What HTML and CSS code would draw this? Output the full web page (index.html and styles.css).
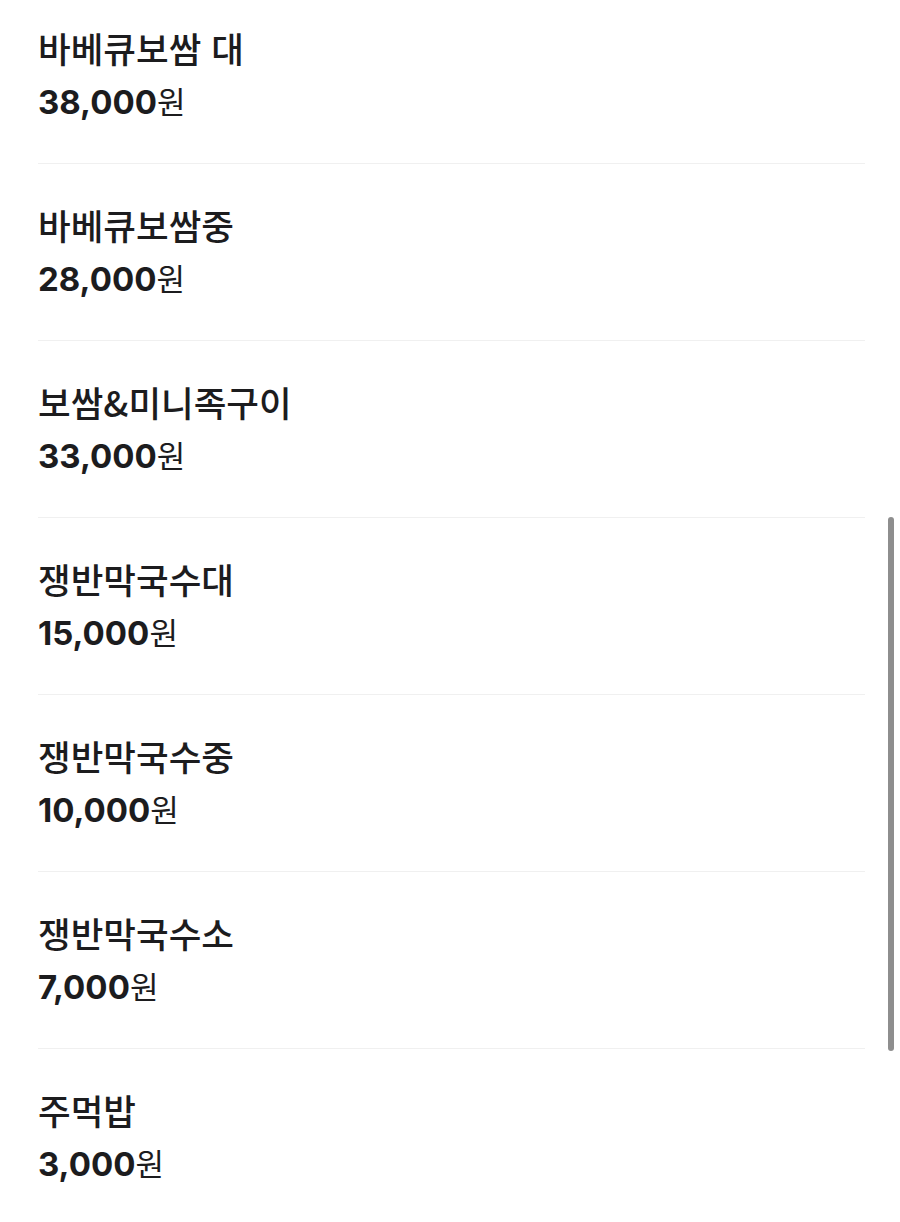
FILE: index.html
```html
<!DOCTYPE html>
<html lang="ko">
<head>
<meta charset="utf-8">
<link rel="stylesheet" href="styles.css">
</head>
<body>
<div class="list">
  <div class="item"><div class="name">바베큐보쌈 대</div><div class="price"><span class="num">38,000</span><span class="won">원</span></div></div>
  <div class="item"><div class="name">바베큐보쌈중</div><div class="price"><span class="num">28,000</span><span class="won">원</span></div></div>
  <div class="item"><div class="name">보쌈&amp;미니족구이</div><div class="price"><span class="num">33,000</span><span class="won">원</span></div></div>
  <div class="item"><div class="name">쟁반막국수대</div><div class="price"><span class="num">15,000</span><span class="won">원</span></div></div>
  <div class="item"><div class="name">쟁반막국수중</div><div class="price"><span class="num">10,000</span><span class="won">원</span></div></div>
  <div class="item"><div class="name">쟁반막국수소</div><div class="price"><span class="num">7,000</span><span class="won">원</span></div></div>
  <div class="item"><div class="name">주먹밥</div><div class="price"><span class="num">3,000</span><span class="won">원</span></div></div>
</div>
<div class="scrollbar"></div>
</body>
</html>
```
FILE: styles.css
```css
html, body {
  margin: 0;
  padding: 0;
  background: #ffffff;
  overflow: hidden;
}
body {
  color: #1c1c1e;
  font-family: "Noto Sans CJK KR", "Noto Sans", sans-serif;
}
.list {
  margin-top: -13px;
  padding: 0 35px 0 38px;
}
.item {
  padding: 38px 0 39px;
  border-bottom: 1px solid #f0f0f0;
}
.name {
  height: 46px;
  font-size: 35.5px;
  font-weight: 500;
  line-height: 46px;
}
.price {
  margin-top: 7px;
  height: 46px;
  line-height: 46px;
  display: flex;
  align-items: baseline;
}
.num {
  font-family: Inter, "Noto Sans", sans-serif;
  font-size: 33px;
  font-weight: 700;
}
.won {
  font-family: "Noto Sans CJK KR", sans-serif;
  font-size: 31px;
  font-weight: 400;
}
.scrollbar {
  position: fixed;
  left: 888px;
  top: 517px;
  width: 6px;
  height: 534px;
  border-radius: 3px;
  background: #8e8e8e;
}
```
